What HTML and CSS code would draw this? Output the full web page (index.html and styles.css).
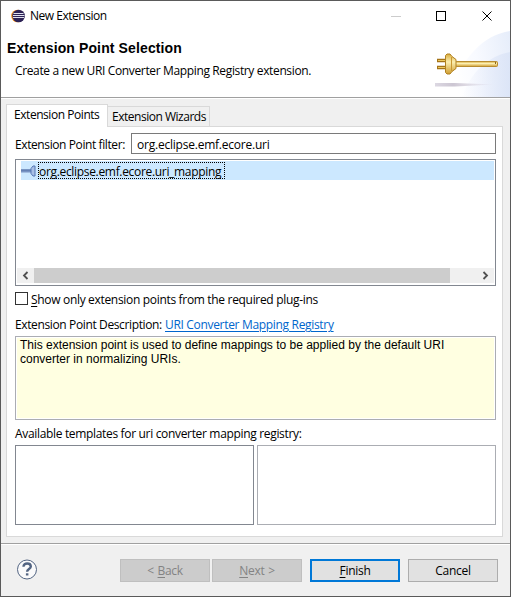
FILE: index.html
```html
<!DOCTYPE html>
<html lang="en">
<head>
<meta charset="utf-8">
<title>New Extension</title>
<link rel="stylesheet" href="styles.css">
</head>
<body>
<main class="window">
  <header class="top">
    <div class="titlebar">
      <svg class="logo" width="14" height="14" viewBox="0 0 14 14"><circle cx="6.500" cy="7" r="6.300" fill="#f7941e"/><circle cx="7.600" cy="7" r="6.300" fill="#2c2255"/><path d="M2.500 4.500h10M2 6.500h11.500M2 8.500h11" stroke="#dfe0ee" stroke-width="1"/></svg>
      <span class="caption">New Extension</span>
      <svg class="controls" width="104" height="12" viewBox="0 0 104 12" fill="none" shape-rendering="crispEdges"><path d="M0 6.500h10" stroke="#ccc"/><rect x="45.500" y="1.500" width="9" height="9" stroke="#000"/><path d="M91.500 1.500l9 9M100.500 1.500l-9 9" stroke="#000" shape-rendering="auto"/></svg>
    </div>
    <h1>Extension Point Selection</h1>
    <p class="message">Create a new URI Converter Mapping Registry extension.</p>
    <svg class="banner" width="75" height="67" viewBox="0 0 75 67">
      <defs>
        <linearGradient id="sky" x1="0" x2="1" y1=".2" y2="0"><stop offset="0" stop-color="#fff"/><stop offset=".4" stop-color="#f8faff"/><stop offset="1" stop-color="#e6edfa"/></linearGradient>
        <linearGradient id="sky2" x1="0" x2="1"><stop offset="0" stop-color="#e4eaf9" stop-opacity="0"/><stop offset="1" stop-color="#dce5f7"/></linearGradient>
        <linearGradient id="gold" x1="0" x2="0" y1="0" y2="1"><stop offset="0" stop-color="#d9ac3c"/><stop offset=".4" stop-color="#fbeeb0"/><stop offset="1" stop-color="#cf9d30"/></linearGradient>
        <linearGradient id="shade"><stop offset="0" stop-color="#dcd8e2"/><stop offset=".3" stop-color="#ccc6d2"/><stop offset="1" stop-color="#d4cedd" stop-opacity="0"/></linearGradient>
      </defs>
      <path d="M75 1C48 5 26 28 14 67H75Z" fill="url(#sky)"/>
      <path d="M75 22C53 26 36 42 27 67H75Z" fill="url(#sky2)"/>
      <path d="M0 53h20l40 1.500-40 2H0Z" fill="url(#shade)"/>
      <path d="M2 30.500h8M2 37.500h8" stroke="#a47318" stroke-width="3.500"/><path d="M3 30.500h8M3 37.500h8" stroke="#ecc95e"/>
      <rect x="20.500" y="31.500" width="42" height="5" rx="1" fill="url(#gold)" stroke="#b88c30"/>
      <path d="M10.500 25.500l1.500-1.500h3l2 2.500 4 3v9l-4 3-2 2.500h-3l-1.500-1.500Z" fill="url(#gold)" stroke="#b08020"/>
      <path d="M16.500 27v14" stroke="#c99833"/><path d="M60.500 32v2" stroke="#8d6416"/>
    </svg>
  </header>
  <section class="content">
    <nav class="tabs"><div class="tab active"><span>Extension Points</span></div><div class="tab"><span>Extension Wizards</span></div></nav>
    <div class="panel">
      <div class="filter"><label for="filter">Extension Point filter:</label><input id="filter" type="text" value="org.eclipse.emf.ecore.uri"></div>
      <div class="list">
        <div class="item">
          <svg width="16" height="12" viewBox="0 0 16 12"><path d="M0 4.500h10v3H0z" fill="#7893c3"/><path d="M0 5h10" stroke="#5271a8"/><path d="M10 3.500l2-2.500h2v10h-2l-2-2.500Z" fill="#a9c0e6" stroke="#5577b5"/></svg>
          <span class="name">org.eclipse.emf.ecore.uri_mapping</span>
        </div>
        <div class="scrollbar">
          <svg width="17" height="15" viewBox="0 0 17 15"><path d="M10.500 4l-3.500 3.500 3.500 3.500" fill="none" stroke="#505050" stroke-width="1.800"/></svg>
          <div class="thumb"></div>
          <svg width="17" height="15" viewBox="0 0 17 15"><path d="M6.500 4l3.500 3.500-3.500 3.500" fill="none" stroke="#505050" stroke-width="1.800"/></svg>
        </div>
      </div>
      <div class="check"><span class="box"></span><span class="label"><u>S</u>how only extension points from the required plug-ins</span></div>
      <div class="desc-title"><span class="desc-label">Extension Point Description:</span><a href="#">URI Converter Mapping Registry</a></div>
      <div class="description">This extension point is used to define mappings to be applied by the default URI<br>converter in normalizing URIs.</div>
      <div class="templates-title">Available templates for uri converter mapping registry:</div>
      <div class="templates"><div class="pane"></div><div class="pane light"></div></div>
    </div>
  </section>
  <footer>
    <svg class="help" width="22" height="22" viewBox="0 0 22 22" fill="none" stroke="#526482"><circle cx="11" cy="10.500" r="9.500" fill="#fafafb"/><path d="M7.500 7.800c0-4.600 7.300-4.200 7.300-.3 0 2.600-3.700 2.500-3.700 5.300" stroke-width="2.400"/><path d="M9.900 15.400h2.500" stroke-width="2.200"/></svg>
    <button disabled><span>&lt; <u>B</u>ack</span></button>
    <button disabled><span><u>N</u>ext &gt;</span></button>
    <button class="primary"><span><u>F</u>inish</span></button>
    <button class="cancel"><span>Cancel</span></button>
  </footer>
</main>
</body>
</html>
```
FILE: styles.css
```css
* { box-sizing: border-box; }
body { margin: 0; font: 12px/16px "Open Sans", "Noto Sans", sans-serif; color: #000; }
.window { width: 511px; height: 597px; border: 1px solid #5a5a5a; background: #f0f0f0; display: flex; flex-direction: column; overflow: hidden; white-space: nowrap; }
.top { position: relative; height: 97px; background: #fff; border-bottom: 1px solid #a0a0a0; flex: none; }
.titlebar { display: flex; align-items: center; height: 29px; padding-left: 10px; }
.caption { margin-left: 5px; letter-spacing: -.48px; flex: 1; }
.controls { margin-right: 15px; }
h1 { margin: 8px 0 0 6px; font: bold 14px/20px "Liberation Sans", Arial, sans-serif; letter-spacing: .12px; }
.message { margin: 5px 0 0 14px; letter-spacing: -.36px; }
.banner { position: absolute; right: 0; bottom: 0; }
.content { height: 446px; flex: none; padding: 5px 8px 0 5px; border-top: 1px solid #fff; border-bottom: 1px solid #a0a0a0; }
.tabs { display: flex; align-items: flex-end; height: 23px; }
.tab { height: 20px; margin-bottom: 1px; border: 1px solid #d9d9d9; border-left: 0; border-bottom: 0; padding: 2px 3px 0 4px; width: 102px; letter-spacing: -.48px; }
.tab.active { height: 23px; margin: 0; border-left: 1px solid #d9d9d9; width: 102px; background: #fff; padding: 2px 7px; position: relative; z-index: 1; letter-spacing: -.45px; }
.panel { margin-top: -1px; width: 497px; height: 411px; border: 1px solid #d9d9d9; background: #fff; padding: 6px 6px 0 8px; }
.filter { display: flex; align-items: center; height: 21px; width: 481px; }
.filter label { width: 116px; padding-top: 2px; letter-spacing: -.4px; }
.filter input { flex: 1; min-width: 0; height: 21px; border: 1px solid #7a7a7a; padding: 1px 5px 0; font: inherit; letter-spacing: -.22px; outline: 0; }
.list { margin-top: 5px; width: 481px; height: 127px; border: 1px solid #828790; padding: 1px; display: flex; flex-direction: column; }
.item { display: flex; align-items: center; height: 19px; margin-left: 4px; background: #cce8ff; }
.name { width: 187px; height: 17px; margin-left: 1px; border: 1px dotted #000; line-height: 17px; letter-spacing: -.32px; }
.scrollbar { display: flex; height: 15px; margin-top: 88px; background: #f0f0f0; }
.thumb { width: 416px; margin-right: 27px; background: #cdcdcd; }
.check { display: flex; align-items: center; height: 13px; margin-top: 6px; }
.box { width: 13px; height: 13px; border: 1px solid #333; }
.label { margin-left: 3px; padding-top: 2px; letter-spacing: -.32px; }
.desc-title { display: flex; margin-top: 12px; height: 16px; }
.desc-label { width: 150px; letter-spacing: -.37px; }
.desc-title a { color: #0066cc; letter-spacing: -.32px; text-underline-offset: 2px; }
.description { margin-top: 3px; width: 481px; height: 84px; border: 1px solid #abadb3; padding: 1px 0 0 4px; background: #ffffe1; box-shadow: inset 0 0 0 1px #fff; font: 12px/14px "Liberation Sans", Arial, sans-serif; }
.templates-title { margin-top: 6px; height: 16px; letter-spacing: -.33px; }
.templates { display: flex; gap: 3px; margin-top: 3px; }
.pane { width: 239px; height: 80px; border: 1px solid #828790; }
.pane.light { border-color: #abadb3; }
footer { flex: 1; border-top: 1px solid #fff; display: flex; align-items: flex-start; padding: 14px 0 0 15px; }
.help { margin-right: 82px; }
button { width: 90px; height: 23px; margin: 0 2px 0 0; padding: 1px 0 0; border: 1px solid #adadad; background: #e1e1e1; color: #000; font: 12px/16px "Open Sans", sans-serif; letter-spacing: -.3px; word-spacing: 1px; }
button:disabled { background: #ccc; border-color: #bfbfbf; color: #838383; }
.primary { margin: 0 8px 0 6px; border: 2px solid #0078d7; }
u { text-underline-offset: 2px; }
```
